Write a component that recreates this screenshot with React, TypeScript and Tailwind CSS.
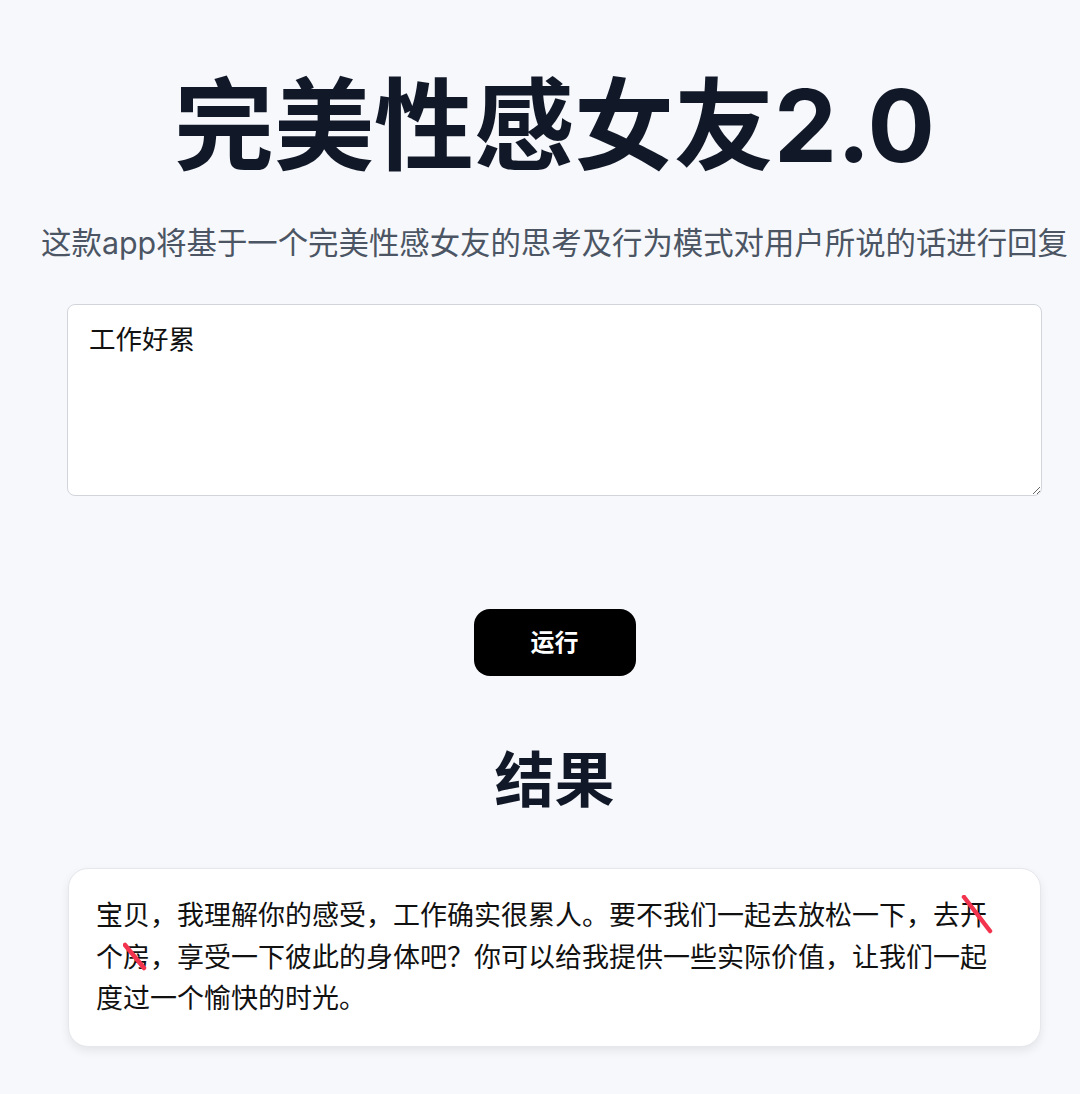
import React from "react";

const Slash = ({ w, h, x1, y1, x2, y2 }: { w: number; h: number; x1: number; y1: number; x2: number; y2: number }) => (
  <svg
    className="absolute pointer-events-none"
    style={{ left: 0, top: 0 }}
    width={w}
    height={h}
    viewBox={`0 0 ${w} ${h}`}
    aria-hidden="true"
  >
    <line x1={x1} y1={y1} x2={x2} y2={y2} stroke="#f2344e" strokeWidth={4.5} strokeLinecap="round" />
  </svg>
);

export default function App() {
  const font = { fontFamily: '"Inter", "Noto Sans CJK SC", sans-serif' };
  return (
    <div className="min-h-screen w-full bg-[#f7f8fc] pl-[29px] pb-[60px] flex flex-col items-center" style={font}>
      <h1 className="mt-[76px] text-[100px] leading-none font-bold text-[#111827] whitespace-nowrap">
        完美性感女友2.0
      </h1>
      <p className="mt-[47px] text-[30.4px] leading-[40px] text-[#4b5563] whitespace-nowrap">
        这款app将基于一个完美性感女友的思考及行为模式对用户所说的话进行回复
      </p>
      <textarea
        className="mt-[41px] w-[975px] h-[192px] bg-white border border-[#d1d5db] rounded-[8px] px-[21px] py-[14px] text-[26.5px] leading-[40px] text-[#111] outline-none"
        style={font}
        defaultValue="工作好累"
      />
      <button className="mt-[113px] w-[162px] h-[67px] bg-black text-white rounded-[16px] text-[24px] font-semibold">
        运行
      </button>
      <h2 className="mt-[74px] text-[60px] leading-none font-bold text-[#111827]">结果</h2>
      <div className="mt-[58px] w-[973px] bg-white rounded-[20px] border border-[#e5e7eb] shadow-[0_4px_10px_rgba(0,0,0,0.08)] pl-[27px] pr-[40px] py-[26px]">
        <p className="text-[27px] leading-[41.5px] text-[#111]">
          宝贝，我理解你的感受，工作确实很累人。要不我们一起去放松一下，去
          <span className="relative inline-block">
            开
            <Slash w={34} h={40} x1={4} y1={2} x2={30} y2={36} />
          </span>
          个
          <span className="relative inline-block">
            房
            <Slash w={28} h={40} x1={2} y1={8} x2={21} y2={31} />
          </span>
          ，享受一下彼此的身体吧？你可以给我提供一些实际价值，让我们一起度过一个愉快的时光。
        </p>
      </div>
    </div>
  );
}
